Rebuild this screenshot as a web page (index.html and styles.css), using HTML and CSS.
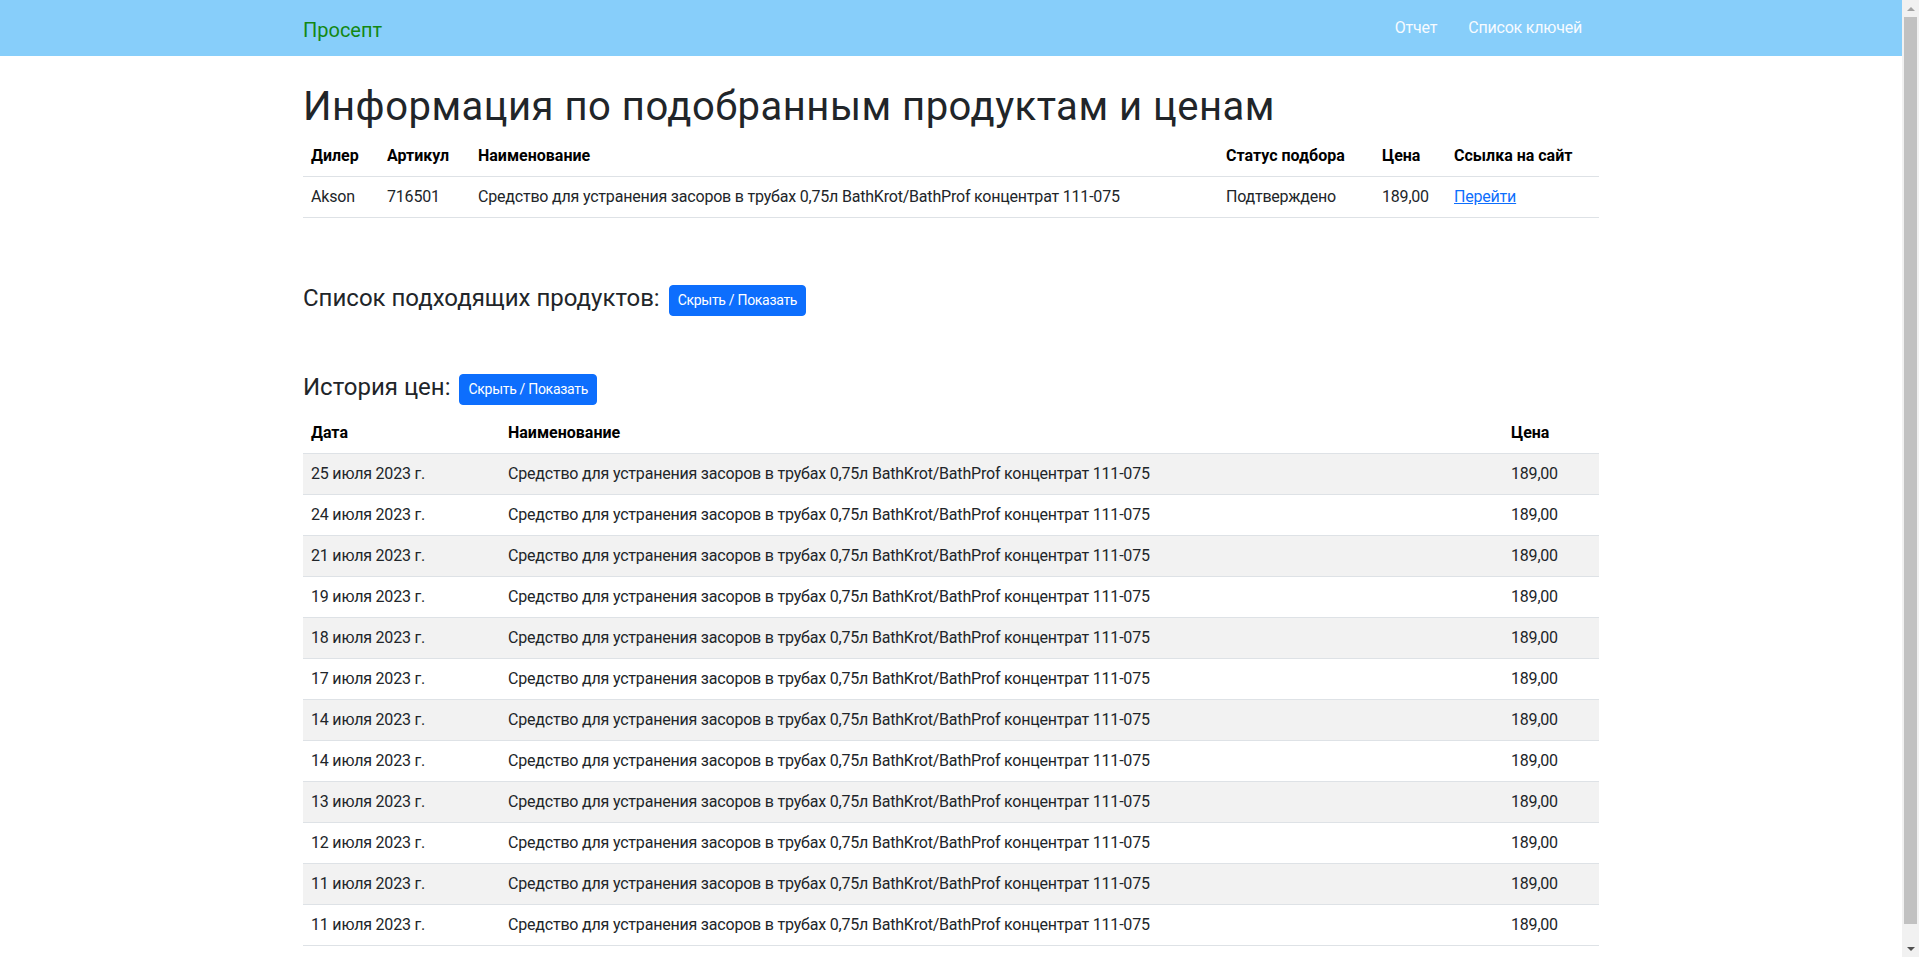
FILE: index.html
```html
<!DOCTYPE html>
<html lang="ru">
<head>
<meta charset="utf-8">
<title>Просепт</title>
<link rel="stylesheet" href="styles.css">
</head>
<body>
<div class="page">
  <nav class="navbar">
    <div class="container navbar-inner">
      <a class="brand" href="#">Просепт</a>
      <ul class="nav-links">
        <li><a class="nav-link" href="#">Отчет</a></li>
        <li><a class="nav-link" href="#">Список ключей</a></li>
      </ul>
    </div>
  </nav>

  <main class="container">
    <h1 class="page-title">Информация по подобранным продуктам и ценам</h1>
    <table class="table info-table">
      <colgroup>
        <col class="c-dealer"><col class="c-sku"><col class="c-name"><col class="c-status"><col class="c-price"><col class="c-link">
      </colgroup>
      <thead>
        <tr><th>Дилер</th><th>Артикул</th><th>Наименование</th><th>Статус подбора</th><th>Цена</th><th>Ссылка на сайт</th></tr>
      </thead>
      <tbody>
        <tr><td>Akson</td><td>716501</td><td>Средство для устранения засоров в трубах 0,75л BathKrot/BathProf концентрат 111-075</td><td>Подтверждено</td><td>189,00</td><td><a class="link" href="#">Перейти</a></td></tr>
      </tbody>
    </table>

    <section class="block block-first">
      <h4 class="block-title"><span class="block-label">Список подходящих продуктов:</span><button class="btn" type="button">Скрыть / Показать</button></h4>
    </section>

    <section class="block block-second">
      <h4 class="block-title"><span class="block-label">История цен:</span><button class="btn" type="button">Скрыть / Показать</button></h4>
      <table class="table history-table striped">
        <colgroup><col class="h-date"><col class="h-name"><col class="h-price"></colgroup>
        <thead><tr><th>Дата</th><th>Наименование</th><th>Цена</th></tr></thead>
        <tbody>
          <tr><td>25 июля 2023 г.</td><td>Средство для устранения засоров в трубах 0,75л BathKrot/BathProf концентрат 111-075</td><td>189,00</td></tr>
          <tr><td>24 июля 2023 г.</td><td>Средство для устранения засоров в трубах 0,75л BathKrot/BathProf концентрат 111-075</td><td>189,00</td></tr>
          <tr><td>21 июля 2023 г.</td><td>Средство для устранения засоров в трубах 0,75л BathKrot/BathProf концентрат 111-075</td><td>189,00</td></tr>
          <tr><td>19 июля 2023 г.</td><td>Средство для устранения засоров в трубах 0,75л BathKrot/BathProf концентрат 111-075</td><td>189,00</td></tr>
          <tr><td>18 июля 2023 г.</td><td>Средство для устранения засоров в трубах 0,75л BathKrot/BathProf концентрат 111-075</td><td>189,00</td></tr>
          <tr><td>17 июля 2023 г.</td><td>Средство для устранения засоров в трубах 0,75л BathKrot/BathProf концентрат 111-075</td><td>189,00</td></tr>
          <tr><td>14 июля 2023 г.</td><td>Средство для устранения засоров в трубах 0,75л BathKrot/BathProf концентрат 111-075</td><td>189,00</td></tr>
          <tr><td>14 июля 2023 г.</td><td>Средство для устранения засоров в трубах 0,75л BathKrot/BathProf концентрат 111-075</td><td>189,00</td></tr>
          <tr><td>13 июля 2023 г.</td><td>Средство для устранения засоров в трубах 0,75л BathKrot/BathProf концентрат 111-075</td><td>189,00</td></tr>
          <tr><td>12 июля 2023 г.</td><td>Средство для устранения засоров в трубах 0,75л BathKrot/BathProf концентрат 111-075</td><td>189,00</td></tr>
          <tr><td>11 июля 2023 г.</td><td>Средство для устранения засоров в трубах 0,75л BathKrot/BathProf концентрат 111-075</td><td>189,00</td></tr>
          <tr><td>11 июля 2023 г.</td><td>Средство для устранения засоров в трубах 0,75л BathKrot/BathProf концентрат 111-075</td><td>189,00</td></tr>
        </tbody>
      </table>
    </section>
  </main>
</div>

<aside class="scrollbar" aria-hidden="true">
  <span class="sb-arrow sb-up"></span>
  <span class="sb-thumb"></span>
  <span class="sb-arrow sb-down"></span>
</aside>
</body>
</html>
```
FILE: styles.css
```css
* { box-sizing: border-box; }

body {
  margin: 0;
  display: grid;
  grid-template-columns: minmax(0, 1fr) 17px;
  align-items: start;
  font-family: Roboto, "Liberation Sans", Arial, sans-serif;
  font-size: 16px;
  line-height: 1.5;
  color: #212529;
  background: #fff;
  letter-spacing: -0.2px;
}

.page { min-width: 0; }

/* imitation of the browser scrollbar visible in the screenshot */
.scrollbar {
  position: sticky;
  top: 0;
  height: 100vh;
  display: flex;
  flex-direction: column;
  align-items: center;
  background: #f1f1f1;
}
.sb-arrow {
  flex: 0 0 17px;
  width: 17px;
  display: flex;
  align-items: center;
  justify-content: center;
}
.sb-arrow::before {
  content: "";
  width: 0;
  height: 0;
  border-left: 4px solid transparent;
  border-right: 4px solid transparent;
}
.sb-up::before { border-bottom: 4px solid #a3a3a3; }
.sb-down::before { border-top: 4px solid #505050; }
.sb-thumb {
  width: 13px;
  height: 907px;
  background: #c1c1c1;
}
.sb-down { margin-top: auto; }

.container {
  width: 100%;
  max-width: 1320px;
  margin: 0 auto;
  padding: 0 12px;
}

/* navbar */
.navbar {
  background: #87cefa;
  padding: 8px 0;
}
.navbar-inner {
  display: flex;
  align-items: center;
  justify-content: space-between;
}
.brand {
  font-size: 20px;
  line-height: 30px;
  padding: 7px 0 3px;
  color: #138813;
  text-decoration: none;
  letter-spacing: 0;
}
.nav-links {
  display: flex;
  list-style: none;
  margin: 0;
  padding: 0 9px 0 0;
}
.nav-link {
  display: block;
  padding: 8px;
  margin-left: 15px;
  color: #f7fbff;
  text-decoration: none;
}

/* headings */
.page-title {
  margin: 27px 0 5px;
  font-size: 40px;
  line-height: 48px;
  font-weight: 400;
  letter-spacing: 0.5px;
}

/* tables */
.table {
  width: 100%;
  border-collapse: collapse;
  table-layout: fixed;
  margin-bottom: 16px;
}
.table th,
.table td {
  padding: 8px;
  text-align: left;
  vertical-align: top;
  border-bottom: 1px solid #dee2e6;
  white-space: nowrap;
}
.table th { font-weight: 700; color: #000; letter-spacing: 0; }

.striped tbody tr:nth-child(odd) td { background: #f2f2f2; }

.c-dealer { width: 76px; }
.c-sku { width: 91px; }
.c-name { width: 748px; }
.c-status { width: 156px; }
.c-price { width: 72px; }
.c-link { width: 153px; }

.h-date { width: 197px; }
.h-name { width: 1003px; }
.h-price { width: 96px; }

.link { color: #0d6efd; text-decoration: underline; }

/* blocks */
.block-first { margin-top: 66px; }
.block-second { margin-top: 57px; }

.block-title {
  display: flex;
  align-items: center;
  gap: 9px;
  height: 32px;
  margin: 0 0 8px;
  font-size: 24px;
  line-height: 1.2;
  font-weight: 400;
  letter-spacing: 0;
}
.block-label { margin-bottom: 3px; }

.btn {
  font-family: inherit;
  font-size: 14px;
  line-height: 21px;
  padding: 4px 8px;
  border: 1px solid #0d6efd;
  border-radius: 4px;
  background: #0d6efd;
  color: #fff;
  letter-spacing: -0.3px;
  cursor: pointer;
}
```
